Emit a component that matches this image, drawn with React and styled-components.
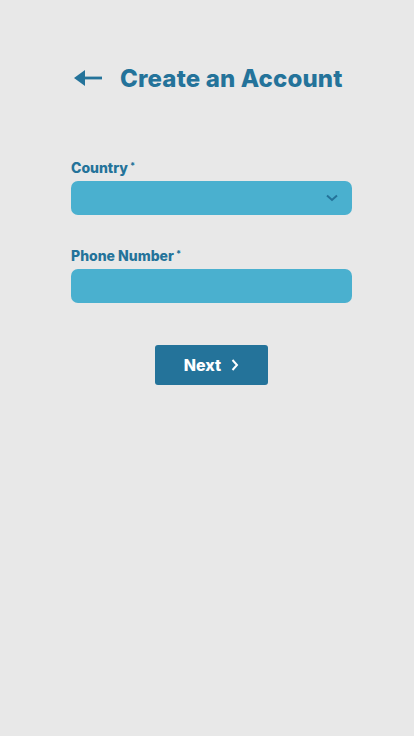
import React from "react";
import styled, { createGlobalStyle } from "styled-components";

const Global = createGlobalStyle`
  html, body { margin: 0; padding: 0; background: #e8e8e8; }
  body { font-family: Inter, "Noto Sans", sans-serif; }
  * { box-sizing: border-box; }
`;

const Page = styled.div`
  min-height: 736px;
  background: #e8e8e8;
  padding: 62px 0 0 71px;
`;

const Header = styled.div`
  display: flex;
  align-items: center;
  gap: 18px;
  height: 32px;
  margin-left: 3px;
`;

const BackButton = styled.button`
  border: 0;
  background: none;
  padding: 0;
  display: flex;
  align-items: center;
  color: #24739a;
  cursor: pointer;
`;

const Title = styled.h1`
  margin: 0;
  font-size: 24px;
  font-weight: 800;
  color: #24739a;
  letter-spacing: 0.15px;
`;

const Form = styled.div`
  width: 281px;
  margin-top: 66px;
  display: flex;
  flex-direction: column;
  gap: 33px;
`;

const Field = styled.div`
  display: flex;
  flex-direction: column;
  gap: 5px;
`;

const Label = styled.label`
  font-size: 14px;
  font-weight: 800;
  color: #24739a;
  line-height: 16px;
  sup { font-size: 9px; margin-left: 2px; vertical-align: 4px; line-height: 0; }
`;

const Box = styled.div`
  height: 34px;
  border-radius: 7px;
  background: #4ab0cf;
  display: flex;
  align-items: center;
  justify-content: flex-end;
  padding-right: 14px;
  color: #24739a;
`;

const ButtonRow = styled.div`
  display: flex;
  justify-content: center;
  margin-top: 9px;
`;

const NextButton = styled.button`
  width: 113px;
  height: 40px;
  border: 0;
  border-radius: 3px;
  background: #24739a;
  color: #fff;
  font-family: Inter, sans-serif;
  font-size: 16px;
  font-weight: 800;
  display: flex;
  align-items: center;
  justify-content: center;
  gap: 10px;
  padding-left: 6px;
`;

export default function App() {
  return (
    <Page>
      <Global />
      <Header>
        <BackButton aria-label="back">
          <svg width="28" height="18" viewBox="0 0 28 18">
            <path d="M0 9 L11 1 L11 17 Z" fill="currentColor" />
            <rect x="9" y="7.6" width="19" height="2.8" fill="currentColor" />
          </svg>
        </BackButton>
        <Title>Create an Account</Title>
      </Header>
      <Form>
        <Field>
          <Label>Country<sup>*</sup></Label>
          <Box>
            <svg width="12" height="8" viewBox="0 0 12 8">
              <path d="M1 1.5 L6 6 L11 1.5" stroke="currentColor" strokeWidth="2" fill="none" />
            </svg>
          </Box>
        </Field>
        <Field>
          <Label>Phone Number<sup>*</sup></Label>
          <Box />
        </Field>
        <ButtonRow>
          <NextButton>
            Next
            <svg width="8" height="12" viewBox="0 0 8 12">
              <path d="M1.5 1 L6 6 L1.5 11" stroke="currentColor" strokeWidth="2" fill="none" />
            </svg>
          </NextButton>
        </ButtonRow>
      </Form>
    </Page>
  );
}
